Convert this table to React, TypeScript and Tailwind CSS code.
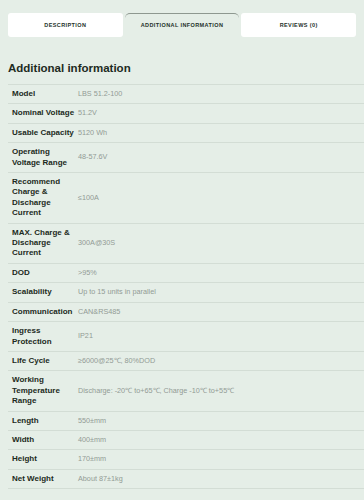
const rows: { label: string; value: string }[] = [
  { label: "Model", value: "LBS 51.2-100" },
  { label: "Nominal Voltage", value: "51.2V" },
  { label: "Usable Capacity", value: "5120 Wh" },
  { label: "Operating Voltage Range", value: "48-57.6V" },
  { label: "Recommend Charge & Discharge Current", value: "≤100A" },
  { label: "MAX. Charge & Discharge Current", value: "300A@30S" },
  { label: "DOD", value: ">95%" },
  { label: "Scalability", value: "Up to 15 units in parallel" },
  { label: "Communication", value: "CAN&RS485" },
  { label: "Ingress Protection", value: "IP21" },
  { label: "Life Cycle", value: "≥6000@25℃, 80%DOD" },
  { label: "Working Temperature Range", value: "Discharge: -20℃ to+65℃, Charge -10℃ to+55℃" },
  { label: "Length", value: "550±mm" },
  { label: "Width", value: "400±mm" },
  { label: "Height", value: "170±mm" },
  { label: "Net Weight", value: "About 87±1kg" },
]

export default function App() {
  return (
    <div
      className="min-h-[500px] w-[364px] bg-[#e5eee7] pl-2 pt-[13px]"
      style={{ fontFamily: '"Liberation Sans", Arial, sans-serif' }}
    >
      <div className="flex gap-[2px] pr-2">
        <div className="flex h-6 flex-1 items-center justify-center rounded-[3px] bg-white text-[5.5px] font-bold tracking-[0.4px] text-[#243029]">
          DESCRIPTION
        </div>
        <div className="flex h-6 flex-1 items-center justify-center rounded-t-[5px] border-t border-[#8e9890] text-[5.5px] font-bold tracking-[0.4px] text-[#243029]">
          ADDITIONAL INFORMATION
        </div>
        <div className="flex h-6 flex-1 items-center justify-center rounded-[3px] bg-white text-[5.5px] font-bold tracking-[0.4px] text-[#243029]">
          REVIEWS (0)
        </div>
      </div>

      <h2 className="mt-[24px] text-[11.5px] font-bold leading-[14px] text-[#1d2b22]">
        Additional information
      </h2>

      <table className="mt-[9px] w-full border-collapse border-t border-[#d3ddd5]">
        <tbody>
          {rows.map((r) => (
            <tr key={r.label} className="border-b border-[#d3ddd5]">
              <th className="w-[67px] py-[4px] pl-1 pr-0 text-left align-middle text-[8px] font-bold leading-[10.4px] text-[#1c2a21]">
                {r.label}
              </th>
              <td className="py-[4px] pl-[3px] align-middle text-[7.25px] leading-[10.4px] text-[#929b95]">
                {r.value}
              </td>
            </tr>
          ))}
        </tbody>
      </table>
    </div>
  )
}
